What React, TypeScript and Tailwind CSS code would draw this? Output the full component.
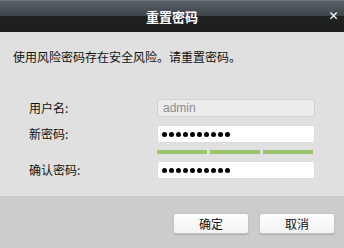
const cjk = { fontFamily: '"Noto Sans CJK SC", "Liberation Sans", sans-serif' };

function Field({ label, children }: { label: string; children: React.ReactNode }) {
  return (
    <div className="flex items-center h-[18px]">
      <span className="w-[157px] pl-[29px] text-[12px] text-[#111]">{label}</span>
      {children}
    </div>
  );
}

function Dots() {
  return (
    <div className="w-[158px] h-[18px] border border-[#dcdcdc] bg-white pl-[4px] flex items-center gap-[2px]">
      {Array.from({ length: 10 }).map((_, i) => (
        <span key={i} className="w-[5px] h-[5px] rounded-full bg-black" />
      ))}
    </div>
  );
}

export default function App() {
  return (
    <div className="w-[344px] h-[248px] flex flex-col bg-[#e0e0e0]" style={cjk}>
      <div className="h-[32px] relative flex items-center justify-center bg-[linear-gradient(to_bottom,#8a8e92_0px,#5a6068_1px,#3e444b_16px,#222222_16px,#1e1e1e_32px)]">
        <span className="text-white font-bold text-[13px] leading-none">重置密码</span>
        <span className="absolute right-[5px] top-[10px] text-white font-bold text-[11px] leading-none">×</span>
      </div>

      <div className="flex-1 flex flex-col">
        <p className="pl-[13px] pt-[17px] text-[12px] leading-[16px] text-[#111]">
          使用风险密码存在安全风险。请重置密码。
        </p>

        <div className="mt-[34px] flex flex-col">
          <Field label="用户名:">
            <div className="w-[158px] h-[18px] border border-[#d2d2d2] rounded-[2px] bg-[#ebebeb] px-[5px] flex items-center text-[12px] text-[#8c8c8c]" style={{ fontFamily: '"Liberation Sans", sans-serif' }}>
              admin
            </div>
          </Field>
          <div className="h-[8px]" />
          <Field label="新密码:">
            <Dots />
          </Field>
          <div className="flex pl-[157px] gap-[3px] mt-[7px] mb-[7px]">
            <div className="w-[50px] h-[4px] bg-[#9bc56b]" />
            <div className="w-[50px] h-[4px] bg-[#9bc56b]" />
            <div className="w-[50px] h-[4px] bg-[#9bc56b]" />
          </div>
          <Field label="确认密码:">
            <Dots />
          </Field>
        </div>
      </div>

      <div className="h-[52px] bg-[#cccccc] flex justify-end items-start pt-[17px] pr-[9px] gap-[10px]">
        <button className="w-[76px] h-[21px] rounded-[3px] border border-[#c4c4c4] bg-[linear-gradient(to_bottom,#ffffff,#f2f2f2)] shadow-[0_1px_1px_rgba(0,0,0,0.15)] text-[12px] text-[#111] leading-none">
          确定
        </button>
        <button className="w-[76px] h-[21px] rounded-[3px] border border-[#c4c4c4] bg-[linear-gradient(to_bottom,#ffffff,#f2f2f2)] shadow-[0_1px_1px_rgba(0,0,0,0.15)] text-[12px] text-[#111] leading-none">
          取消
        </button>
      </div>
    </div>
  );
}
